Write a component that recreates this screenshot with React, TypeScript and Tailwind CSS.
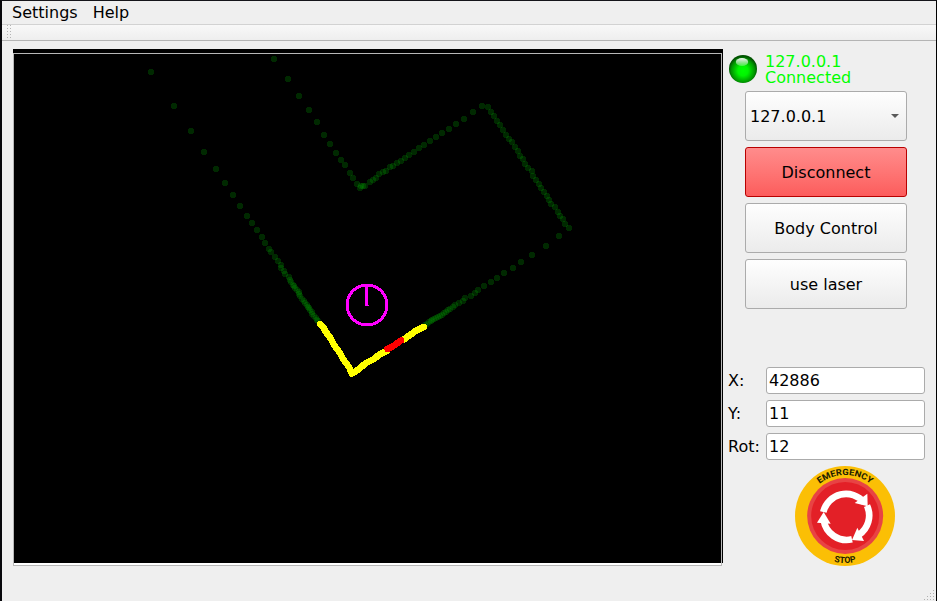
import React from "react";

type Point = [number, number];

const LEFT_WALL: Point[] = [
  [151, 72], [174, 106], [191, 131], [204, 152], [216, 169], [225, 183], [233, 195],
  [240, 206], [247, 216], [252, 223], [257, 230], [262, 237], [265, 243], [269, 249],
  [271, 252], [275, 257], [278, 261], [281, 265], [281, 268], [284, 271], [285, 274],
  [289, 277], [290, 280], [291, 282], [293, 285], [294, 286], [295, 288], [297, 290],
  [299, 292], [299, 294], [300, 296], [302, 299], [304, 301], [305, 303], [307, 305],
  [308, 307], [309, 308], [310, 310], [312, 312], [312, 314], [314, 316], [316, 318],
  [317, 320], [318, 321],
];

const UPPER_WALL: Point[] = [
  [274, 59], [288, 79], [299, 96], [309, 110], [317, 122], [324, 135], [330, 144],
  [336, 153], [341, 160], [345, 165], [350, 173], [353, 178], [357, 184], [360, 188],
  [361, 186], [363, 186], [365, 186], [370, 182], [373, 180], [376, 178], [379, 174],
  [383, 172], [386, 171], [390, 167], [393, 166], [397, 163], [401, 161], [405, 158],
  [409, 155], [414, 152], [419, 148], [424, 145], [430, 141], [436, 137], [442, 133],
  [449, 129], [456, 124], [464, 119], [473, 112], [482, 106],
];

const RIGHT_WALL: Point[] = [
  [488, 107], [491, 112], [494, 116], [497, 121], [500, 125], [503, 130], [506, 135],
  [509, 139], [512, 142], [515, 147], [518, 151], [520, 156], [523, 159], [525, 164],
  [528, 168], [532, 171], [533, 176], [536, 180], [539, 184], [541, 188], [544, 192],
  [547, 196], [549, 200], [551, 204], [555, 207], [558, 212], [560, 216], [563, 219],
  [565, 224], [569, 228],
];

const LOWER_WALL: Point[] = [
  [559, 236], [546, 246], [532, 255], [521, 262], [513, 268], [504, 273], [497, 278],
  [491, 282], [484, 286], [478, 290], [475, 293], [471, 296], [465, 298], [463, 301],
  [459, 303], [455, 305], [453, 307], [450, 309], [448, 310], [446, 312], [444, 313],
  [442, 315], [440, 316], [438, 317], [436, 318], [434, 319], [432, 320], [431, 321],
  [429, 322], [427, 324], [425, 325],
];

const SCAN: Point[] = [...LEFT_WALL, ...UPPER_WALL, ...RIGHT_WALL, ...LOWER_WALL];

function LaserMap() {
  return (
    <svg className="block h-[509px] w-[707px] bg-black" viewBox="14 54 707 509" shapeRendering="crispEdges">
      <g fill="#009600" fillOpacity="0.27">
        {SCAN.map(([x, y], i) => (
          <circle key={i} cx={x} cy={y} r="3.1" />
        ))}
      </g>
      <g fill="none" strokeWidth="6.6" strokeLinecap="round" strokeLinejoin="round">
        <path
          stroke="#ffff00"
          d="M320 324L323 327L326 332L331 339L334 345L340 353L343 359L349 367L352 373.500L359 369L366 363L374 359L380 354L387 351M403 340L410 335L417 330L424 327"
        />
        <path stroke="#ff0000" d="M387.500 349L395 345L401 340.500" />
      </g>
      <g fill="none" stroke="#ff00ff" strokeWidth="3">
        <circle cx="367" cy="305" r="20" />
        <path d="M366.5 284V306" />
      </g>
      <path d="M368 305h1v1h-1z" fill="#ff00ff" />
    </svg>
  );
}

function StatusLed() {
  return (
    <svg className="size-7 shrink-0" viewBox="0 0 28 28">
      <defs>
        <radialGradient id="led" cx="0.5" cy="0.56" r="0.52">
          <stop offset="0" stopColor="#00ff00" />
          <stop offset="0.35" stopColor="#00f400" />
          <stop offset="0.8" stopColor="#009500" />
          <stop offset="1" stopColor="#005000" />
        </radialGradient>
        <linearGradient id="shine" x1="0" y1="0" x2="0" y2="1">
          <stop offset="0" stopColor="#fff" stopOpacity="0.95" />
          <stop offset="1" stopColor="#fff" stopOpacity="0.25" />
        </linearGradient>
      </defs>
      <circle cx="14" cy="14" r="14" fill="url(#led)" />
      <ellipse cx="13" cy="7" rx="6.2" ry="4" fill="url(#shine)" />
    </svg>
  );
}

function EmergencyStop() {
  return (
    <svg className="size-[100px]" viewBox="0 0 300 300">
      <defs>
        <path id="top-arc" d="M27 150A123 123 0 0 1 273 150" />
        <path id="bottom-arc" d="M9 150A141 141 0 0 0 291 150" />
      </defs>
      <circle cx="150" cy="150" r="150" fill="#fbbf05" />
      <circle cx="150.500" cy="150" r="114" fill="#e84344" />
      <circle cx="150.500" cy="150" r="102" fill="#e32027" />
      <g fill="none" stroke="#fff" strokeWidth="20">
        <path d="M85 138A70 70 0 0 1 207 109" />
        <path d="M216 119A70 70 0 0 1 191 207" />
        <path d="M171 220A70 70 0 0 1 86 162" />
      </g>
      <g fill="#fff">
        <path d="M217 83L218 121L179 111Z" />
        <path d="M187 185L171 222L207 225Z" />
        <path d="M86 138L66 170L107 173Z" />
      </g>
      <g fill="#211c00" fontFamily="Roboto, sans-serif" fontWeight="700" fontSize="26" textAnchor="middle">
        <text>
          <textPath href="#top-arc" startOffset="50%" textLength="165" lengthAdjust="spacingAndGlyphs">EMERGENCY</textPath>
        </text>
        <text>
          <textPath href="#bottom-arc" startOffset="50%" textLength="67" lengthAdjust="spacingAndGlyphs">STOP</textPath>
        </text>
      </g>
    </svg>
  );
}

const BUTTON =
  "flex h-[50px] w-[162px] items-center rounded-[3px] border leading-[19px] ";
const PLAIN = "border-[#ababab] bg-linear-to-b from-[#fefefe] to-[#ebebeb] ";

function Field({ label, value }: { label: string; value: string }) {
  return (
    <label className="flex h-[27px] items-center">
      <span className="w-[38px] shrink-0">{label}</span>
      <input
        className="h-[27px] w-[159px] rounded-[3px] border border-[#ababab] bg-white px-[2px] text-black outline-none"
        defaultValue={value}
      />
    </label>
  );
}

function SizeGrip() {
  const dots: Point[] = [[9, 0], [6, 3], [9, 3], [3, 6], [6, 6], [9, 6], [0, 9], [3, 9], [6, 9], [9, 9]];
  return (
    <svg className="size-[10px]" viewBox="0 0 10 10" shapeRendering="crispEdges">
      {dots.map(([x, y]) => (
        <rect key={`${x}-${y}`} x={x} y={y} width="1" height="1" fill="#b0b0b0" />
      ))}
    </svg>
  );
}

function ToolbarHandle() {
  return (
    <svg className="h-[15px] w-[4px]" viewBox="0 0 4 15" shapeRendering="crispEdges">
      {[0, 3, 6, 9, 12].map((y) => (
        <g key={y} fill="#b4b4b4">
          <rect x="0" y={y} width="1" height="1" />
          <rect x="3" y={y} width="1" height="1" />
        </g>
      ))}
    </svg>
  );
}

export default function App() {
  return (
    <div className="flex h-[601px] w-[937px] flex-col overflow-hidden border-t border-r border-l-2 border-t-[#15151a] border-r-black border-l-[#08080c] bg-[#efefef] font-['DejaVu_Sans',sans-serif] text-[16px] text-black">
      <nav className="flex h-6 items-center gap-[15px] border-b border-[#d2d2d2] pl-[10px] leading-[19px]">
        <span>Settings</span>
        <span>Help</span>
      </nav>
      <div className="flex h-4 shrink-0 border-b border-[#b4b4b4] bg-linear-to-b from-[#f8f8f8] to-[#eeeeee] pl-[5px]">
        <ToolbarHandle />
      </div>
      <main className="flex flex-1 pt-2 pl-[11px]">
        <section className="h-[517px] w-[710px] shrink-0">
          <div className="h-1 bg-black" />
          <div className="flex h-[513px]">
            <div className="h-[513px] w-[709px] border border-[#b8b8b8] bg-white">
              <LaserMap />
            </div>
            <div className="h-[510px] w-px bg-black" />
          </div>
        </section>
        <aside className="flex w-[213px] shrink-0 flex-col">
          <div className="flex h-[42px] items-start pt-[6px] pl-[6px]">
            <StatusLed />
            <div className="-mt-px ml-2 leading-4 text-[#00ff00]">
              <div>127.0.0.1</div>
              <div>Connected</div>
            </div>
          </div>
          <div className="flex flex-col gap-[6px] pl-[22px]">
            <button className={BUTTON + PLAIN + "justify-between pr-[7px] pl-[4px]"}>
              <span>127.0.0.1</span>
              <svg className="h-1 w-2" viewBox="0 0 8 4">
                <path d="M0 0H8L4 4Z" fill="#5a5a5a" />
              </svg>
            </button>
            <button
              className={BUTTON + "justify-center border-[#b80000] bg-linear-to-b from-[#ff8c8c] to-[#fc5c5c]"}
            >
              Disconnect
            </button>
            <button className={BUTTON + PLAIN + "justify-center"}>Body Control</button>
            <button className={BUTTON + PLAIN + "justify-center"}>use laser</button>
          </div>
          <div className="mt-[58px] flex flex-col gap-[6px] pl-[5px]">
            <Field label="X:" value="42886" />
            <Field label="Y:" value="11" />
            <Field label="Rot:" value="12" />
          </div>
          <div className="mt-[6px] ml-[72px]">
            <EmergencyStop />
          </div>
          <div className="mt-auto mr-[2px] self-end pb-[1px]">
            <SizeGrip />
          </div>
        </aside>
      </main>
    </div>
  );
}
